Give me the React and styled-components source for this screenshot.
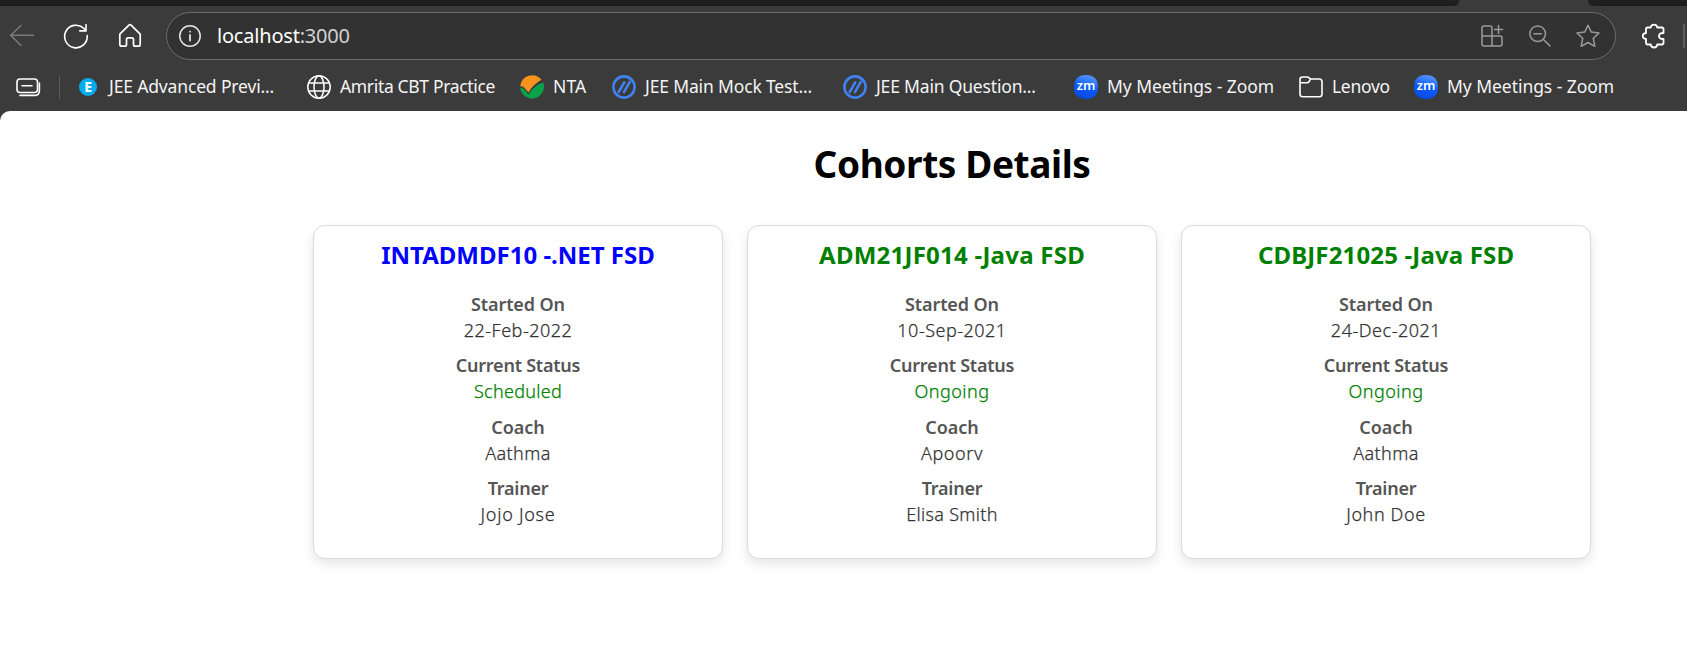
import React from "react";
import styled, { createGlobalStyle } from "styled-components";

const Global = createGlobalStyle`
  * { box-sizing: border-box; }
  body { margin: 0; background: #3b3b3b; font-family: "Noto Sans", "Open Sans", sans-serif; }
`;

const Window = styled.div`
  width: 1687px;
  height: 668px;
  display: flex;
  flex-direction: column;
  overflow: hidden;
  background: #3b3b3b;
`;
const TabStrip = styled.div`
  height: 6px;
  flex: none;
  display: flex;
  justify-content: space-between;
`;
const StripLeft = styled.div`
  width: 1459px;
  background: linear-gradient(#212121, #1c1c1c);
  border-bottom-right-radius: 5px;
`;
const StripRight = styled(StripLeft)`
  width: 99px;
  border-radius: 0 0 0 5px;
`;
const Toolbar = styled.div`
  height: 60px;
  flex: none;
  display: flex;
  align-items: center;
  padding: 0 0 0 8px;
`;
const NavButton = styled.div`
  width: 28px;
  height: 28px;
  flex: none;
  margin-right: 26px;
  display: flex;
`;
const AddressBar = styled.div`
  width: 1450px;
  height: 48px;
  flex: none;
  margin-left: -4px;
  display: flex;
  align-items: center;
  padding: 0 15px 0 11px;
  border: 1.5px solid #6b6b6b;
  border-radius: 24px;
  background: #323232;
`;
const Url = styled.span`
  flex: 1;
  margin-left: 15px;
  color: #fff;
  font-size: 20px;
  line-height: 28px;
  letter-spacing: -0.2px;
`;
const Port = styled.span`color: #d2d2d2;`;
const BarActions = styled.div`
  display: flex;
  gap: 24px;
`;
const Extensions = styled.div`
  display: flex;
  margin-left: 26px;
`;
const Divider = styled.div`
  width: ${(p) => p.$w || 1}px;
  height: 24px;
  flex: none;
  background: #5c5c5c;
`;
const ToolbarEnd = styled(Divider)`margin-left: 17px;`;
const Bookmarks = styled.div`
  height: 45px;
  flex: none;
  display: flex;
  align-items: center;
  padding: 0 0 3px 16px;
`;
const BookmarkDivider = styled(Divider)`margin: 0 16px 0 19px;`;
const Bookmark = styled.div`
  width: ${(p) => p.$w}px;
  flex: none;
  display: flex;
  align-items: center;
  gap: 9px;
  white-space: nowrap;
  color: #f4f4f4;
  font-size: 17.5px;
  line-height: 24px;
  letter-spacing: ${(p) => p.$ls}px;
`;
const BookmarkLabel = styled.span`margin-top: -2px;`;
const Svg = styled.svg`
  display: block;
  flex: none;
  overflow: visible;
`;
const Page = styled.main`
  flex: 1;
  background: #fff;
  border-top-left-radius: 10px;
  padding: 27.6px 96.3px 0 313.3px;
`;
const PageTitle = styled.h1`
  margin: 0 0 36.4px;
  text-align: center;
  color: #000;
  font-size: 37px;
  line-height: 50px;
  letter-spacing: -0.4px;
`;
const Cards = styled.div`
  display: flex;
  gap: 24.6px;
`;
const Card = styled.section`
  flex: 1;
  height: 334px;
  padding-top: 12.7px;
  text-align: center;
  border: 1px solid #dadada;
  border-radius: 12px;
  background: #fff;
  box-shadow: 0 5px 12px rgba(0, 0, 0, 0.1);
`;
const CardTitle = styled.h3`
  margin: 0 0 20.3px;
  color: ${(p) => p.$color};
  font-size: 24px;
  line-height: 32px;
  letter-spacing: ${(p) => p.$ls}px;
`;
const Details = styled.dl`margin: 0;`;
const Label = styled.dt`
  color: #555;
  font-size: 18px;
  font-weight: 600;
  line-height: 26px;
  letter-spacing: ${(p) => p.$ls}px;
`;
const Value = styled.dd`
  margin: 0 0 9.4px;
  color: ${(p) => p.$color || "#333"};
  font-size: 18px;
  font-weight: 300;
  -webkit-text-stroke: 0.25px currentColor;
  line-height: 26px;
  letter-spacing: ${(p) => p.$ls}px;
`;

const Stroke = ({ size = 24, color = "#fff", width = 1.5, children }) => (
  <Svg width={size} height={size} viewBox={`0 0 ${size} ${size}`} fill="none" stroke={color} strokeWidth={width} strokeLinecap="round" strokeLinejoin="round">
    {children}
  </Svg>
);
const BackIcon = () => (
  <Stroke size={28} color="#7b7b7b"><path d="M25.5 13.3H2.5M13 3.5 2.7 13.3 13 23.5" /></Stroke>
);
const ReloadIcon = () => (
  <Stroke size={28} width={1.6}><path d="M25.2 13.500a11.3 11.3 0 1 1-3.600-7.300l2.500 2.600M24 2.600v6.300h-6.200" /></Stroke>
);
const HomeIcon = () => (
  <Stroke size={28} width={1.7}>
    <path d="M3.8 12.2 12.9 3.2q1.1-1 2.2 0l9.1 9v10q0 2-2 2h-3q-1.700 0-1.700-1.700v-5q0-1.700-1.700-1.700h-3.600q-1.700 0-1.700 1.700v5q0 1.700-1.700 1.700h-3q-2 0-2-2z" />
  </Stroke>
);
const InfoIcon = () => (
  <Stroke color="#e6e6e6"><circle cx="12" cy="12" r="10.2" /><path d="M12 11v5.500M12 7.600v.1" strokeWidth="1.800" /></Stroke>
);
const AppsIcon = () => (
  <Stroke color="#9a9a9a">
    <path d="M12 12V4q0-2-2-2H4Q2 2 2 4v16q0 2 2 2h16q2 0 2-2v-6q0-2-2-2H2M12 12v10M18.500 1.500v8M14.500 5.500h8" />
  </Stroke>
);
const ZoomOutIcon = () => (
  <Stroke color="#9a9a9a"><circle cx="9.700" cy="9.700" r="7.800" /><path d="m15.500 15.500 6.500 6.500M6 9.700h7.400" /></Stroke>
);
const StarIcon = () => (
  <Stroke color="#9a9a9a">
    <path d="M12 1.200 15.200 8l7.800 1-5.700 5.300 1.500 8L12 18.500l-6.800 3.800 1.500-8L1 9l7.800-1z" />
  </Stroke>
);
const PuzzleIcon = () => (
  <Stroke width={1.8}>
    <path d="M5.500 3.500h3.200C9 1.500 10.200.700 12 .700s3 .800 3.300 2.800h4.500q1.700 0 1.700 1.700v3.800c-3.200-.2-4.500 1-4.500 3s1.300 3.200 4.500 3v3.800q0 1.700-1.700 1.700h-4.500c-.3 2-1.500 3-3.300 3s-3-1-3.300-3H5.700q-1.700 0-1.700-1.700V15C2 14.800.800 13.800.800 12S2 9.200 4 9V5.200q0-1.700 1.500-1.700z" />
  </Stroke>
);
const StackIcon = () => (
  <Stroke width={1.6}>
    <rect x="1" y="4" width="20.500" height="13.500" rx="3" /><path d="M6 10.800h10M4 20.400H18.500c3 0 4.900-2 4.900-5V8" />
  </Stroke>
);
const EIcon = () => (
  <Svg width="24" height="24" viewBox="0 0 24 24">
    <circle cx="12" cy="12" r="9" fill="#00aeef" />
    <text x="12" y="17" fill="#fff" textAnchor="middle" fontFamily="Noto Sans, sans-serif" fontSize="14" fontWeight="800">E</text>
  </Svg>
);
const GlobeIcon = () => (
  <Stroke width={1.5}>
    <circle cx="12" cy="12" r="11.200" /><ellipse cx="12" cy="12" rx="5" ry="11.200" /><path d="M2 8h20M2 16h20" />
  </Stroke>
);
const NtaIcon = () => (
  <Svg width="24" height="24" viewBox="0 0 24 24">
    <path d="M.2 11A12 12 0 0 1 21.500 4.800C16 7.800 11.500 12 8.500 17.500L3.500 12z" fill="#f7931e" />
    <path d="M.1 12.300 4 14 8.500 19.500C12 14 17 9 23.400 7.500A12 12 0 1 1 .1 12.300z" fill="#0aa14b" />
  </Svg>
);
const SlashIcon = () => (
  <Stroke color="#3f82f0" width={2.600}>
    <circle cx="12" cy="12" r="10.600" /><path d="M6.800 16.800 12.200 7.300M12 17.200 17.800 6.800" />
  </Stroke>
);
const ZoomAppIcon = () => (
  <Svg width="24" height="24" viewBox="0 0 24 24">
    <defs><linearGradient id="zm" x1="0" y1="1" x2=".3" y2="0"><stop offset="0" stopColor="#0845d8" /><stop offset=".6" stopColor="#0b5cff" /><stop offset="1" stopColor="#4b8dff" /></linearGradient></defs>
    <rect width="24" height="24" rx="10.500" fill="url(#zm)" />
    <text x="12" y="15.300" fill="#fff" textAnchor="middle" textLength="18.500" lengthAdjust="spacingAndGlyphs" fontFamily="Noto Sans, sans-serif" fontSize="13" fontWeight="600">zm</text>
  </Svg>
);
const FolderIcon = () => (
  <Stroke width={1.600}>
    <path d="M1 19V4.500Q1 2 3.500 2h4.700q1.200 0 2 .8L11.500 4h8.800Q23 4 23 6.700V19q0 2.700-2.700 2.700H3.700Q1 21.700 1 19zM1.200 7.700h7q1 0 1.700-.8L11.500 4.200" />
  </Stroke>
);

const bookmarks = [
  { icon: <EIcon />, text: "JEE Advanced Previ...", w: 231, ls: -0.15 },
  { icon: <GlobeIcon />, text: "Amrita CBT Practice", w: 213, ls: -0.34 },
  { icon: <NtaIcon />, text: "NTA", w: 92, ls: 0.1 },
  { icon: <SlashIcon />, text: "JEE Main Mock Test...", w: 231, ls: -0.15 },
  { icon: <SlashIcon />, text: "JEE Main Question...", w: 231, ls: -0.18 },
  { icon: <ZoomAppIcon />, text: "My Meetings - Zoom", w: 225, ls: -0.05 },
  { icon: <FolderIcon />, text: "Lenovo", w: 115, ls: -0.3 },
  { icon: <ZoomAppIcon />, text: "My Meetings - Zoom", w: 220, ls: -0.05 },
];

const labelSpacing = { "Started On": -0.1, "Current Status": -0.22, Coach: 0, Trainer: -0.25 };
const cohorts = [
  {
    title: "INTADMDF10 -.NET FSD", color: "blue", ls: 0,
    rows: [["Started On", "22-Feb-2022", 0.5], ["Current Status", "Scheduled", 0.3], ["Coach", "Aathma", 0.4], ["Trainer", "Jojo Jose", 0.75]],
  },
  {
    title: "ADM21JF014 -Java FSD", color: "green", ls: 0.24,
    rows: [["Started On", "10-Sep-2021", 0.5], ["Current Status", "Ongoing", 0.45], ["Coach", "Apoorv", 0.6], ["Trainer", "Elisa Smith", 0.3]],
  },
  {
    title: "CDBJF21025 -Java FSD", color: "green", ls: 0.15,
    rows: [["Started On", "24-Dec-2021", 0.52], ["Current Status", "Ongoing", 0.45], ["Coach", "Aathma", 0.4], ["Trainer", "John Doe", 0.6]],
  },
];

export default function App() {
  return (
    <Window>
      <Global />
      <TabStrip><StripLeft /><StripRight /></TabStrip>
      <Toolbar>
        <NavButton><BackIcon /></NavButton>
        <NavButton><ReloadIcon /></NavButton>
        <NavButton><HomeIcon /></NavButton>
        <AddressBar>
          <InfoIcon />
          <Url>localhost<Port>:3000</Port></Url>
          <BarActions><AppsIcon /><ZoomOutIcon /><StarIcon /></BarActions>
        </AddressBar>
        <Extensions><PuzzleIcon /></Extensions>
        <ToolbarEnd $w={2} />
      </Toolbar>
      <Bookmarks>
        <StackIcon />
        <BookmarkDivider />
        {bookmarks.map((b, i) => (
          <Bookmark key={i} $w={b.w} $ls={b.ls}>{b.icon}<BookmarkLabel>{b.text}</BookmarkLabel></Bookmark>
        ))}
      </Bookmarks>
      <Page>
        <PageTitle>Cohorts Details</PageTitle>
        <Cards>
          {cohorts.map((c) => (
            <Card key={c.title}>
              <CardTitle $color={c.color} $ls={c.ls}>{c.title}</CardTitle>
              <Details>
                {c.rows.map(([label, value, ls]) => (
                  <React.Fragment key={label}>
                    <Label $ls={labelSpacing[label]}>{label}</Label>
                    <Value $ls={ls} $color={label === "Current Status" ? "green" : undefined}>{value}</Value>
                  </React.Fragment>
                ))}
              </Details>
            </Card>
          ))}
        </Cards>
      </Page>
    </Window>
  );
}
